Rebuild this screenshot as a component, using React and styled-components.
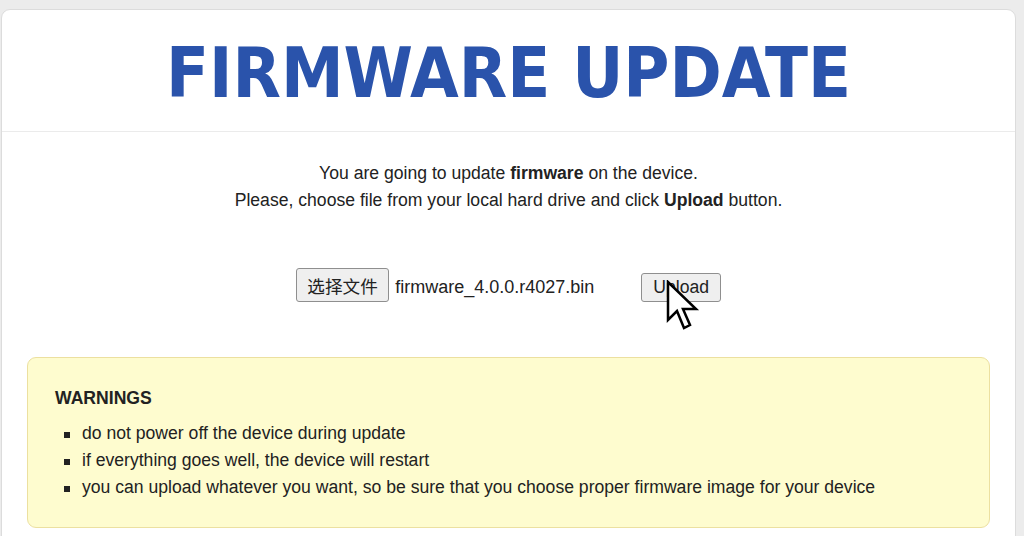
import React from "react";
import styled, { createGlobalStyle } from "styled-components";

const Global = createGlobalStyle`
  html, body { margin: 0; padding: 0; background: #ececec; overflow: hidden; }
  body { font-family: "Liberation Sans", Arial, sans-serif; }
`;

const Page = styled.div`
  width: 1024px;
  height: 536px;
  padding: 9px 8px 0 1px;
  box-sizing: border-box;
  position: relative;
  overflow: hidden;
`;

const Card = styled.div`
  background: #ffffff;
  border: 1px solid #dcdcdc;
  border-radius: 9px;
  height: 560px;
  display: flex;
  flex-direction: column;
`;

const Header = styled.div`
  height: 121px;
  border-bottom: 1px solid #ebebeb;
  display: flex;
  align-items: center;
  justify-content: center;
`;

const Title = styled.h1`
  margin: 0;
  font-family: "DejaVu Sans Condensed", "DejaVu Sans", Verdana, sans-serif;
  font-stretch: condensed;
  font-weight: bold;
  font-size: 70px;
  color: #2a53ab;
  padding-top: 4px;
`;

const Body = styled.div`
  padding: 28px 25px 0 25px;
  display: flex;
  flex-direction: column;
  align-items: center;
`;

const Intro = styled.p`
  margin: 0;
  text-align: center;
  font-size: 17.6px;
  line-height: 27px;
  color: #222;
`;

const FileRow = styled.div`
  margin-top: 54px;
  display: flex;
  align-items: center;
`;

const NativeButton = styled.span`
  display: inline-flex;
  align-items: center;
  justify-content: center;
  box-sizing: border-box;
  height: ${(p) => p.$h}px;
  padding: 0 ${(p) => p.$pad}px;
  margin-top: ${(p) => p.$dy || 0}px;
  background: #efefef;
  border: 1px solid #8f8f8f;
  border-radius: 3px;
  font-size: 17.6px;
  color: #222;
  font-family: "Liberation Sans", "Noto Sans CJK SC", Arial, sans-serif;
`;

const FileName = styled.span`
  font-size: 18px;
  color: #222;
  margin: 5px 47px 0 6px;
`;

const Cursor = styled.svg`
  position: absolute;
  left: 666px;
  top: 280px;
`;

const Warning = styled.div`
  align-self: stretch;
  margin-top: 55px;
  background: #fefccf;
  border: 1px solid #ece0a0;
  border-radius: 9px;
  padding: 28px 27px 26px 27px;
  color: #222;
`;

const WarnTitle = styled.div`
  font-weight: bold;
  font-size: 17.6px;
  line-height: 24px;
`;

const List = styled.ul`
  margin: 10px 0 0 0;
  padding: 0;
  list-style: none;
  font-size: 17.6px;
  line-height: 27px;
`;

const Item = styled.li`
  display: flex;
  align-items: center;
  &::before {
    content: "";
    flex: none;
    width: 6px;
    height: 6px;
    margin: 2px 12px 0 9px;
    background: #222;
  }
`;

export default function App() {
  return (
    <>
      <Global />
      <Page>
        <Card>
          <Header>
            <Title>FIRMWARE UPDATE</Title>
          </Header>
          <Body>
            <Intro>
              You are going to update <b>firmware</b> on the device.
              <br />
              Please, choose file from your local hard drive and click <b>Upload</b> button.
            </Intro>
            <FileRow>
              <NativeButton $h={34} $pad={10.5}>选择文件</NativeButton>
              <FileName>firmware_4.0.0.r4027.bin</FileName>
              <NativeButton $h={29} $pad={11} $dy={4}>Upload</NativeButton>
            </FileRow>
            <Warning>
              <WarnTitle>WARNINGS</WarnTitle>
              <List>
                <Item>do not power off the device during update</Item>
                <Item>if everything goes well, the device will restart</Item>
                <Item>you can upload whatever you want, so be sure that you choose proper firmware image for your device</Item>
              </List>
            </Warning>
          </Body>
        </Card>
        <Cursor width="34" height="54" viewBox="0 0 34 54">
          <path d="M2 2 L2 40 L11 31 L18 48 L24 45 L17 29 L30 29 Z" fill="#fff" stroke="#000" strokeWidth="2.5" strokeLinejoin="miter" />
        </Cursor>
      </Page>
    </>
  );
}
